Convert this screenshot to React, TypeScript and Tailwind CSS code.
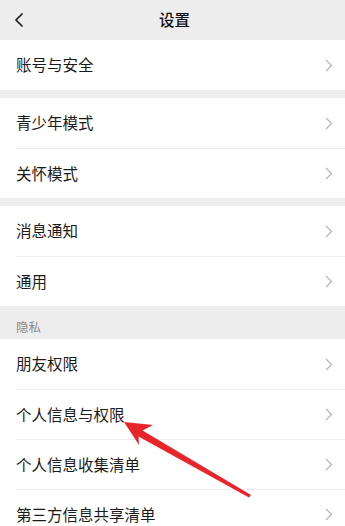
const groups: string[][] = [
  ['账号与安全'],
  ['青少年模式', '关怀模式'],
  ['消息通知', '通用'],
];

const privacy = ['朋友权限', '个人信息与权限', '个人信息收集清单', '第三方信息共享清单'];

function Chevron() {
  return (
    <svg width="8" height="13" viewBox="0 0 8 13" fill="none" className="shrink-0">
      <path d="M1 1l5.5 5.5L1 12" stroke="#b6b6b6" strokeWidth="1.3" />
    </svg>
  );
}

function Row({ label, first }: { label: string; first: boolean }) {
  return (
    <div className="h-[50px] pl-4 bg-white">
      <div className={`h-full flex items-center justify-between pr-[12px] ${first ? '' : 'border-t border-[#ececec]'}`}>
        <span className="text-[15.5px] text-[#1b1b1b]">{label}</span>
        <Chevron />
      </div>
    </div>
  );
}

export default function App() {
  return (
    <div
      className="relative h-[526px] w-full overflow-hidden bg-[#ededed]"
      style={{ fontFamily: '"Noto Sans CJK SC", "Noto Sans", sans-serif' }}
    >
      {/* Header */}
      <div className="h-10 flex items-center relative">
        <svg width="10" height="16" viewBox="0 0 10 16" fill="none" className="ml-[14px]">
          <path d="M8.5 1.5L2 8l6.5 6.5" stroke="#191919" strokeWidth="1.6" />
        </svg>
        <span className="absolute left-1/2 -translate-x-1/2 ml-[2px] text-[15.5px] font-medium text-[#111]">设置</span>
      </div>

      <div className="flex flex-col gap-2">
        {groups.map((g, i) => (
          <div key={i}>
            {g.map((label, j) => (
              <Row key={label} label={label} first={j === 0} />
            ))}
          </div>
        ))}
      </div>

      <div className="h-[33px] pt-[12px] pl-4 text-[12.5px] leading-[18px] text-[#8a8a8a]">隐私</div>
      <div>
        {privacy.map((label, j) => (
          <Row key={label} label={label} first={j === 0} />
        ))}
      </div>

      {/* annotation arrow */}
      <svg className="absolute inset-0 pointer-events-none" width="345" height="526" viewBox="0 0 345 526">
        <polygon
          points="124,422 153,425 142.5,430.5 251,495 249,497.5 138.5,436.5 139,445"
          fill="#e8252b"
        />
      </svg>
    </div>
  );
}
